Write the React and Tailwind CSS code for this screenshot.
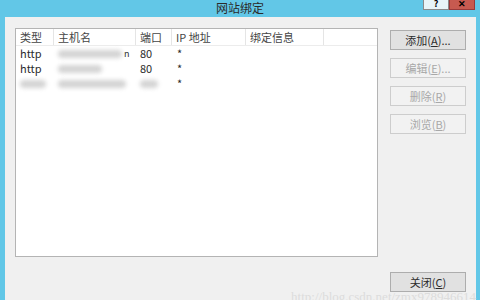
import React from "react";

const font = { fontFamily: '"Microsoft YaHei UI", "Noto Sans CJK SC", "Noto Sans", sans-serif' };

const cols = [
  { label: "类型", w: "w-[38px]" },
  { label: "主机名", w: "w-[82px]" },
  { label: "端口", w: "w-[36px]" },
  { label: "IP 地址", w: "w-[74px]" },
  { label: "绑定信息", w: "w-[78px]" },
];

function Blur({ className }) {
  return <div className={`h-[8px] rounded-sm bg-[#d4d4d4] blur-[2px] ${className}`} />;
}

function Row({ type, host, port }) {
  return (
    <div className="flex h-[15px] items-center text-[11px] text-[#2b2b2b]">
      <div className="w-[38px] pl-[4px]">{type}</div>
      <div className="w-[82px] pl-[4px]">{host}</div>
      <div className="w-[36px] pl-[4px]">{port}</div>
      <div className="w-[74px] pl-[5px] leading-none">*</div>
    </div>
  );
}

function Btn({ children, disabled }) {
  return (
    <button
      className={`h-[20px] w-[76px] border text-[11px] leading-none ${
        disabled
          ? "border-[#cdcdcd] bg-[#f2f2f2] text-[#a8a8a8]"
          : "border-[#adadad] bg-[#e1e1e1] text-[#2b2b2b]"
      }`}
    >
      {children}
    </button>
  );
}

export default function App() {
  return (
    <div className="relative flex h-[300px] w-[480px] flex-col overflow-hidden bg-[#62c7e7]" style={font}>
      {/* title bar */}
      <div className="relative flex h-[17px] items-center justify-center">
        <span className="-mt-[2px] text-[12px] leading-[14px] text-[#2b2b2b]">网站绑定</span>
        <div className="absolute right-[5px] top-0 flex">
          <div className="flex h-[10px] w-[26px] items-end justify-center border border-t-0 border-[#8a8a8a] bg-[#e8f4f8] pb-[1px] text-[9px] font-bold leading-[9px] text-black">
            ?
          </div>
          <div className="flex h-[10px] w-[26px] items-end justify-center border border-t-0 border-[#9a3a3a] bg-[#c75a50] pb-[1px] text-[9px] font-bold leading-[9px] text-black">
            ✕
          </div>
        </div>
      </div>

      {/* client area */}
      <div className="ml-[5px] mr-[4px] flex flex-1 bg-[#f0f0f0] pl-[10px] pt-[11px] pb-[8px]">
        <div className="h-[229px] w-[363px] border border-[#b4b4b4] bg-white">
          <div className="flex h-[17px] items-center border-b border-[#ececec] text-[11px] text-[#444]">
            {cols.map((c) => (
              <div key={c.label} className={`${c.w} h-full border-r border-[#e5e5e5] pl-[4px] leading-[16px]`}>
                {c.label}
              </div>
            ))}
          </div>
          <div>
            <Row
              type="http"
              host={
                <div className="flex items-center gap-[2px]">
                  <Blur className="w-[64px]" />
                  <span className="text-[9px] leading-none">n</span>
                </div>
              }
              port="80"
            />
            <Row type="http" host={<Blur className="w-[44px]" />} port="80" />
            <Row
              type={<Blur className="w-[26px]" />}
              host={<Blur className="w-[68px]" />}
              port={<Blur className="w-[18px]" />}
            />
          </div>
        </div>

        <div className="ml-[12px] flex flex-col justify-between pt-[2px]">
          <div className="flex flex-col gap-[8px]">
            <Btn>
              添加(<u>A</u>)...
            </Btn>
            <Btn disabled>
              编辑(<u>E</u>)...
            </Btn>
            <Btn disabled>
              删除(<u>R</u>)
            </Btn>
            <Btn disabled>
              浏览(<u>B</u>)
            </Btn>
          </div>
          <Btn>
            关闭(<u>C</u>)
          </Btn>
        </div>
      </div>

      {/* watermark */}
      <div
        className="pointer-events-none absolute bottom-[-6px] right-[4px] text-[13px] text-[#dcdcdc]"
        style={{ fontFamily: '"Liberation Serif", serif' }}
      >
        http://blog.csdn.net/zmx978946614
      </div>
    </div>
  );
}
